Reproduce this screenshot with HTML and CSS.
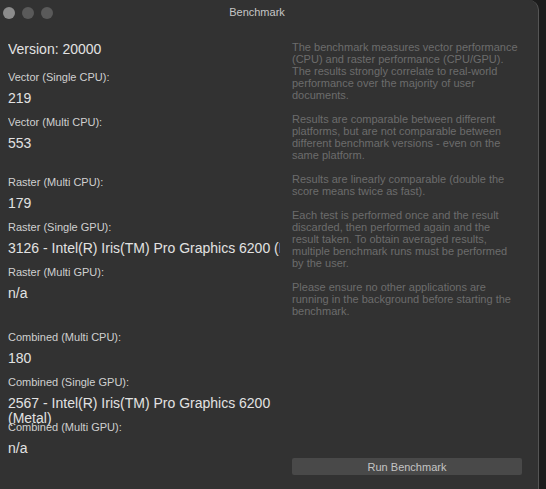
FILE: index.html
```html
<!DOCTYPE html>
<html lang="en">
<head>
    <meta charset="UTF-8">
    <meta name="viewport" content="width=device-width, initial-scale=1.0">
    <title>Benchmark</title>
    <link rel="stylesheet" href="styles.css">
</head>
<body>

    <div class="window">

        <!-- Title bar -->
        <div class="titlebar">
            <div class="lights">
                <span class="light active"></span>
                <span class="light"></span>
                <span class="light"></span>
            </div>
            <div class="title">Benchmark</div>
        </div>

        <div class="content">

            <!-- Results -->
            <div class="results">
                <div class="version">Version: 20000</div>

                <div class="group">
                    <div class="label">Vector (Single CPU):</div>
                    <div class="value">219</div>
                    <div class="label">Vector (Multi CPU):</div>
                    <div class="value">553</div>
                </div>

                <div class="group raster">
                    <div class="label">Raster (Multi CPU):</div>
                    <div class="value">179</div>
                    <div class="label">Raster (Single GPU):</div>
                    <div class="value single">3126 - Intel(R) Iris(TM) Pro Graphics 6200 (Metal)</div>
                    <div class="label">Raster (Multi GPU):</div>
                    <div class="value">n/a</div>
                </div>

                <div class="group combined">
                    <div class="label">Combined (Multi CPU):</div>
                    <div class="value">180</div>
                    <div class="label">Combined (Single GPU):</div>
                    <div class="value">2567 - Intel(R) Iris(TM) Pro Graphics 6200 (Metal)</div>
                    <div class="label">Combined (Multi GPU):</div>
                    <div class="value">n/a</div>
                </div>
            </div>

            <!-- Description -->
            <div class="info">
                <p>The benchmark measures vector performance (CPU) and raster performance (CPU/GPU). The results strongly correlate to real-world performance over the majority of user documents.</p>
                <p>Results are comparable between different platforms, but are not comparable between different benchmark versions - even on the same platform.</p>
                <p>Results are linearly comparable (double the score means twice as fast).</p>
                <p>Each test is performed once and the result discarded, then performed again and the result taken. To obtain averaged results, multiple benchmark runs must be performed by the user.</p>
                <p>Please ensure no other applications are running in the background before starting the benchmark.</p>

                <button class="run">Run Benchmark</button>
            </div>

        </div>
    </div>

</body>
</html>
```

FILE: styles.css
```css
/* Page */
body {
    margin: 0;
    width: 546px;
    height: 489px;
    overflow: hidden;
    background: #1c1c1c;
    font-family: 'Liberation Sans', Arial, sans-serif;
}

/* Window frame */
.window {
    width: 538px;
    height: 489px;
    background: #323232;
    border-right: 1px solid #555;
    border-top-right-radius: 10px;
    display: flex;
    flex-direction: column;
}

/* Title bar */
.titlebar {
    height: 28px;
    display: flex;
    align-items: center;
    flex-shrink: 0;
}

.lights {
    display: flex;
    gap: 7px;
    padding-left: 3px;
    width: 50px;
    margin-top: -2px;
}

.light {
    width: 12px;
    height: 12px;
    border-radius: 50%;
    background: #5a5a5a;
}

.light.active {
    background: #8c8c8c;
}

.title {
    flex: 1;
    text-align: center;
    padding-right: 77px;
    margin-top: -4px;
    font-size: 11px;
    color: #c6c6c6;
}

/* Main area */
.content {
    flex: 1;
    display: flex;
    padding: 11px 0 0 8px;
    gap: 12px;
}

.results {
    width: 272px;
    overflow: hidden;
}

.version {
    height: 28px;
    line-height: 21px;
    font-size: 14px;
    color: #e2e2e2;
}

.group.raster {
    margin-top: 15px;
}

.group.combined {
    margin-top: 20px;
}

.label {
    height: 21px;
    line-height: 21px;
    font-size: 11px;
    color: #d0d0d0;
}

.value {
    box-sizing: border-box;
    height: 24px;
    padding-top: 3px;
    line-height: 15px;
    font-size: 14px;
    color: #e2e2e2;
}

.value.single {
    white-space: nowrap;
}

/* Right column text */
.info {
    width: 230px;
    display: flex;
    flex-direction: column;
    padding-top: 2px;
}

.info p {
    width: 227px;
    margin: 0 0 12px 0;
    font-size: 11px;
    line-height: 12px;
    color: #6c6c6c;
}

.run {
    margin-top: auto;
    margin-bottom: 14px;
    height: 17px;
    padding: 0;
    border: none;
    border-radius: 2px;
    background: #494949;
    color: #c4c4c4;
    font-family: 'Liberation Sans', Arial, sans-serif;
    font-size: 11px;
}
```
